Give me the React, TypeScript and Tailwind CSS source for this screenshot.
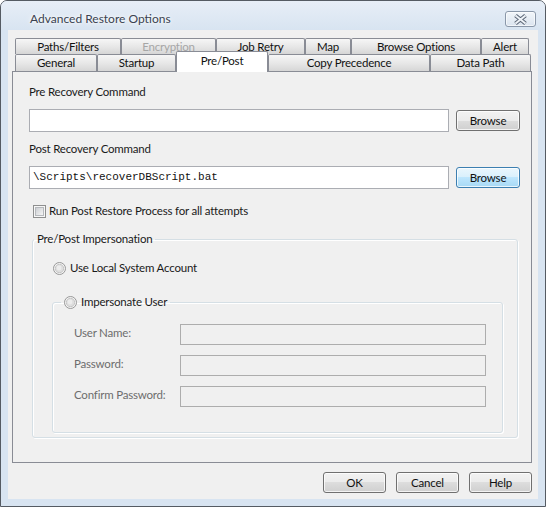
import React from "react";

type Tab = { label: string; w: string; disabled?: boolean; active?: boolean };

const backRow: Tab[] = [
  { label: "Paths/Filters", w: "w-[106px]" },
  { label: "Encryption", w: "w-[95px]", disabled: true },
  { label: "Job Retry", w: "w-[89px]" },
  { label: "Map", w: "w-[46px]" },
  { label: "Browse Options", w: "w-[130px]" },
  { label: "Alert", w: "w-[48px]" },
];

const frontRow: Tab[] = [
  { label: "General", w: "w-[82px]" },
  { label: "Startup", w: "w-[79px]" },
  { label: "Pre/Post", w: "w-[92px]", active: true },
  { label: "Copy Precedence", w: "w-[162px]" },
  { label: "Data Path", w: "w-[101px]" },
];

const idleTab =
  "border border-b-0 border-[#898c95] rounded-t-[2px] bg-[linear-gradient(#f6f6f6,#e6e6e6_55%,#d6d6d6)]";

function TabButton({ tab, tall }: { tab: Tab; tall?: boolean }) {
  if (tab.active) {
    return (
      <div
        className={`${tab.w} relative z-10 -mt-[3px] flex h-[21px] shrink-0 items-start justify-center self-start rounded-t-[2px] border border-b-0 border-[#898c95] bg-white pt-[1px] leading-4 text-[#111]`}
      >
        {tab.label}
      </div>
    );
  }
  return (
    <div
      className={`${tab.w} ${idleTab} flex shrink-0 items-center justify-center leading-4 ${
        tall ? "h-[17px]" : "h-[16px]"
      } ${tab.disabled ? "text-[#a6a6a6]" : "text-[#111]"}`}
    >
      {tab.label}
    </div>
  );
}

function PushButton({
  children,
  hot,
  wide,
}: {
  children: React.ReactNode;
  hot?: boolean;
  wide?: boolean;
}) {
  return (
    <button
      type="button"
      className={`flex h-[21px] shrink-0 items-center justify-center rounded-[3px] border leading-4 text-[#111] shadow-[inset_0_0_0_1px_rgba(255,255,255,0.75)] ${
        wide ? "w-[64px]" : "w-[63px]"
      } ${
        hot
          ? "border-[#3c7fb1] bg-[linear-gradient(#eaf6fd,#d9f0fc_50%,#bee6fd_50%,#a7d9f5)]"
          : "border-[#707070] bg-[linear-gradient(#f2f2f2,#ebebeb_50%,#dddddd_50%,#cfcfcf)]"
      }`}
    >
      {children}
    </button>
  );
}

function Radio() {
  return (
    <svg width="13" height="13" viewBox="0 0 13 13" className="shrink-0">
      <circle cx="6.5" cy="6.5" r="6" fill="#f4f4f4" stroke="#979797" />
      <circle cx="6.5" cy="6.5" r="4.2" fill="#dedede" stroke="#bdbdbd" strokeWidth="0.8" />
      <circle cx="6" cy="6" r="2.4" fill="#ececec" />
    </svg>
  );
}

function Checkbox() {
  return (
    <div className="h-[13px] w-[13px] shrink-0 border border-[#8e8f8f] bg-[#f7f7f7] p-[1px]">
      <div className="h-full w-full border border-[#b6b9bd] bg-[linear-gradient(135deg,#cdd0d4,#f5f5f5)]" />
    </div>
  );
}

function CloseGlyph() {
  return (
    <svg width="15" height="11" viewBox="0 0 15 11">
      <path d="M2.5 1.5 L12.5 9.5 M12.5 1.5 L2.5 9.5" stroke="#5d6878" strokeWidth="4" />
      <path d="M2.5 1.5 L12.5 9.5 M12.5 1.5 L2.5 9.5" stroke="#eef2f7" strokeWidth="2" />
    </svg>
  );
}

const groupBox =
  "rounded-[3px] border border-[#d5dfe5] shadow-[inset_1px_1px_0_#fff,1px_1px_0_#fff]";

export default function App() {
  return (
    <div className="h-[507px] w-[546px] bg-white [font-family:Lato,sans-serif] text-[11.5px] tracking-[-0.2px]">
      <div className="flex h-[507px] w-[546px] flex-col overflow-hidden rounded-t-[7px] border border-[#555b63] bg-[#d8e4f1]">
        {/* caption */}
        <div className="flex h-[29px] shrink-0 items-start justify-between bg-[linear-gradient(#e7eef7,#d8e4f1)] pl-[29px] pr-[9px]">
          <span className="mt-[10px] text-[12px] leading-4 tracking-normal text-[#3a4250] [text-shadow:0_0_6px_#fff,0_0_3px_#fff]">
            Advanced Restore Options
          </span>
          <div className="mt-[10px] flex h-[16px] w-[31px] items-center justify-center rounded-[3px] border border-[#8a97a9] bg-[linear-gradient(#f2f6fa,#dbe4ef)] shadow-[inset_0_0_0_1px_rgba(255,255,255,0.6)]">
            <CloseGlyph />
          </div>
        </div>

        {/* client area */}
        <div className="mx-[7px] mb-[7px] flex flex-1 flex-col bg-[#f0f0f0] pl-[4px] pr-[6px] pt-[8px]">
          {/* tab strip */}
          <div className="ml-[3px] flex flex-col">
            <div className="flex">
              {backRow.map((t) => (
                <TabButton key={t.label} tab={t} />
              ))}
            </div>
            <div className="flex h-[17px]">
              {frontRow.map((t) => (
                <TabButton key={t.label} tab={t} tall />
              ))}
            </div>
          </div>

          {/* tab page */}
          <div className="flex h-[392px] flex-col border border-[#898c95] bg-[#f0f0f0] pl-[16px] pr-[11px] pt-[12px] text-[#1a1a1a]">
            <div className="h-4 leading-4">Pre Recovery Command</div>
            <div className="mt-[9px] flex gap-[7px]">
              <div className="h-[23px] flex-1 border border-[#abadb3] bg-white" />
              <div className="mt-[1px]">
                <PushButton wide>Browse</PushButton>
              </div>
            </div>

            <div className="mt-[9px] h-4 leading-4">Post Recovery Command</div>
            <div className="mt-[9px] flex gap-[7px]">
              <div className="flex h-[23px] flex-1 items-center border border-[#abadb3] bg-white pl-[3px] [font-family:'Liberation_Mono',monospace] text-[11px] tracking-normal text-[#111]">
                \Scripts\recoverDBScript.bat
              </div>
              <div className="mt-[1px]">
                <PushButton hot wide>
                  Browse
                </PushButton>
              </div>
            </div>

            <div className="mt-[14px] flex h-4 items-center gap-[3px] pl-[4px] leading-4">
              <Checkbox />
              <span>Run Post Restore Process for all attempts</span>
            </div>

            <fieldset className={`ml-[3px] mr-[2px] mt-[12px] pb-[4px] ${groupBox}`}>
              <legend className="ml-[1px] px-[3px] leading-4">Pre/Post Impersonation</legend>

              <div className="mt-[13px] flex h-4 items-center gap-[4px] pl-[20px] leading-4">
                <Radio />
                <span>Use Local System Account</span>
              </div>

              <fieldset className={`ml-[19px] mr-[14px] mt-[18px] pb-[25px] pl-[21px] pr-[16px] ${groupBox}`}>
                <legend className="-ml-[13px] px-[3px] leading-4">
                  <span className="flex items-center gap-[4px]">
                    <Radio />
                    <span>Impersonate User</span>
                  </span>
                </legend>
                <div className="mt-[14px] grid grid-cols-[106px_1fr] gap-y-[10px] text-[#6d6d6d]">
                  <div className="flex h-[21px] items-center pb-[4px]">User Name:</div>
                  <div className="h-[21px] border border-[#adadad] bg-[#f0f0f0]" />
                  <div className="flex h-[21px] items-center pb-[4px]">Password:</div>
                  <div className="h-[21px] border border-[#adadad] bg-[#f0f0f0]" />
                  <div className="flex h-[21px] items-center pb-[4px]">Confirm Password:</div>
                  <div className="h-[21px] border border-[#adadad] bg-[#f0f0f0]" />
                </div>
              </fieldset>
            </fieldset>
          </div>

          {/* dialog buttons */}
          <div className="mt-[9px] flex justify-end gap-[10px]">
            <PushButton>OK</PushButton>
            <PushButton>Cancel</PushButton>
            <PushButton>Help</PushButton>
          </div>
        </div>
      </div>
    </div>
  );
}
